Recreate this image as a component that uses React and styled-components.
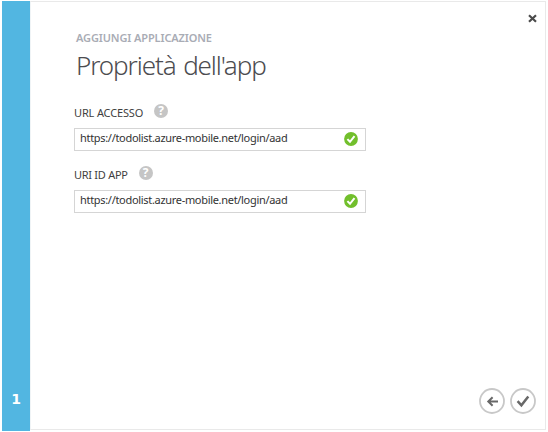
import React from "react";
import styled, { createGlobalStyle } from "styled-components";

const GlobalStyle = createGlobalStyle`
  * { box-sizing: border-box; }
  body {
    margin: 0;
    background: #fff;
    font-family: "Noto Sans", "Open Sans", sans-serif;
  }
`;

const Page = styled.div`
  width: 548px;
  height: 432px;
  padding: 1px 2px 1px 2px;
`;

const Dialog = styled.div`
  display: grid;
  grid-template-columns: 28px 1fr;
  height: 430px;
`;

const StepRail = styled.aside`
  display: flex;
  align-items: flex-end;
  justify-content: center;
  padding-bottom: 21px;
  background: #52b6e1;
  color: #fff;
  font: 700 14px/22px "DejaVu Sans", sans-serif;
`;

const Panel = styled.main`
  display: flex;
  flex-direction: column;
  height: 429px;
  border: 1px solid #e9e9e9;
  border-left-color: #f0f4f6;
`;

const TopBar = styled.div`
  display: flex;
  justify-content: flex-end;
  height: 28px;
  padding: 12px 8px 0 0;
`;

const IconButton = styled.button`
  display: block;
  padding: 0;
  border: 0;
  background: none;
  line-height: 0;
`;

const CloseButton = styled(IconButton)`
  align-self: flex-start;
`;

const Heading = styled.header`
  padding-left: 45px;
`;

const Eyebrow = styled.div`
  height: 16px;
  color: #a9acb5;
  font-size: 11px;
  font-weight: 600;
  line-height: 16px;
  letter-spacing: -0.12px;
  white-space: nowrap;
`;

const Title = styled.h1`
  height: 36px;
  margin: 1px 0 0;
  color: #4c4c50;
  font-size: 26px;
  font-weight: 300;
  line-height: 36px;
  letter-spacing: -1.1px;
  word-spacing: 2px;
  white-space: nowrap;
`;

const Form = styled.form`
  display: flex;
  flex-direction: column;
  gap: 14px;
  padding: 20px 0 0 43px;
`;

const Field = styled.div`
  height: 48px;
`;

const LabelRow = styled.div`
  display: flex;
  gap: 11px;
  height: 25px;
`;

const Label = styled.label`
  padding-top: 2px;
  color: #3f3f3f;
  font-size: 11px;
  line-height: 16px;
  letter-spacing: ${({ $spacing }) => $spacing};
  white-space: nowrap;
`;

const InputBox = styled.div`
  display: flex;
  justify-content: space-between;
  width: 292px;
  height: 23px;
  padding: 3px 7px 0 5px;
  border: 1px solid #d5d5d5;
  background: #fff;
`;

const Value = styled.span`
  color: #333;
  font-size: 11px;
  line-height: 12px;
  letter-spacing: -0.31px;
  white-space: nowrap;
`;

const Footer = styled.footer`
  display: flex;
  justify-content: flex-end;
  gap: 5px;
  margin-top: auto;
  padding: 0 9px 15px 0;
`;

const BackButton = styled(IconButton)`
  margin-top: 1px;
  height: 26px;
`;

const Svg = styled.svg`
  display: block;
  flex: none;
`;

const HelpMark = styled.span`
  display: grid;
  place-items: center;
  width: 14px;
  height: 14px;
  margin-top: 1px;
  border-radius: 50%;
  background: #c5c5c5;
  color: #fff;
  font: 700 12px/14px "Open Sans", sans-serif;
`;

const CloseIcon = () => (
  <Svg width="9" height="9" viewBox="0 0 9 9">
    <path d="M1 1.2 8 7.8M8 1.2 1 7.8" stroke="#4b4b4b" strokeWidth="2.2" />
  </Svg>
);

const ValidIcon = () => (
  <Svg width="14" height="14" viewBox="0 0 14 14">
    <circle cx="7" cy="7" r="6.9" fill="#72bf2c" />
    <path d="M3.4 7.1 6 9.8 10.5 4.1" fill="none" stroke="#fff" strokeWidth="2" />
  </Svg>
);

const BackIcon = () => (
  <Svg width="26" height="26" viewBox="0 0 26 26">
    <circle cx="13" cy="13" r="12" fill="#fff" stroke="#c8c8c8" strokeWidth="1.8" />
    <path d="M19 13.5H9.5M13.6 9.3 9.3 13.5l4.3 4.2" fill="none" stroke="#686868" strokeWidth="2" />
  </Svg>
);

const ConfirmIcon = () => (
  <Svg width="26" height="26" viewBox="0 0 26 26">
    <circle cx="13" cy="13" r="12" fill="#fff" stroke="#c8c8c8" strokeWidth="1.8" />
    <path d="M7.6 13.2 11.4 17.3 18.3 8.5" fill="none" stroke="#686868" strokeWidth="2.5" />
  </Svg>
);

const fields = [
  { label: "URL ACCESSO", spacing: "-0.15px", value: "https://todolist.azure-mobile.net/login/aad" },
  { label: "URI ID APP", spacing: "-0.28px", value: "https://todolist.azure-mobile.net/login/aad" },
];

export default function App() {
  return (
    <Page>
      <GlobalStyle />
      <Dialog>
        <StepRail>1</StepRail>
        <Panel>
          <TopBar>
            <CloseButton aria-label="Chiudi"><CloseIcon /></CloseButton>
          </TopBar>
          <Heading>
            <Eyebrow>AGGIUNGI APPLICAZIONE</Eyebrow>
            <Title>Proprietà dell'app</Title>
          </Heading>
          <Form>
            {fields.map((field) => (
              <Field key={field.label}>
                <LabelRow>
                  <Label $spacing={field.spacing}>{field.label}</Label>
                  <HelpMark>?</HelpMark>
                </LabelRow>
                <InputBox>
                  <Value>{field.value}</Value>
                  <ValidIcon />
                </InputBox>
              </Field>
            ))}
          </Form>
          <Footer>
            <BackButton aria-label="Indietro"><BackIcon /></BackButton>
            <IconButton aria-label="Conferma"><ConfirmIcon /></IconButton>
          </Footer>
        </Panel>
      </Dialog>
    </Page>
  );
}
